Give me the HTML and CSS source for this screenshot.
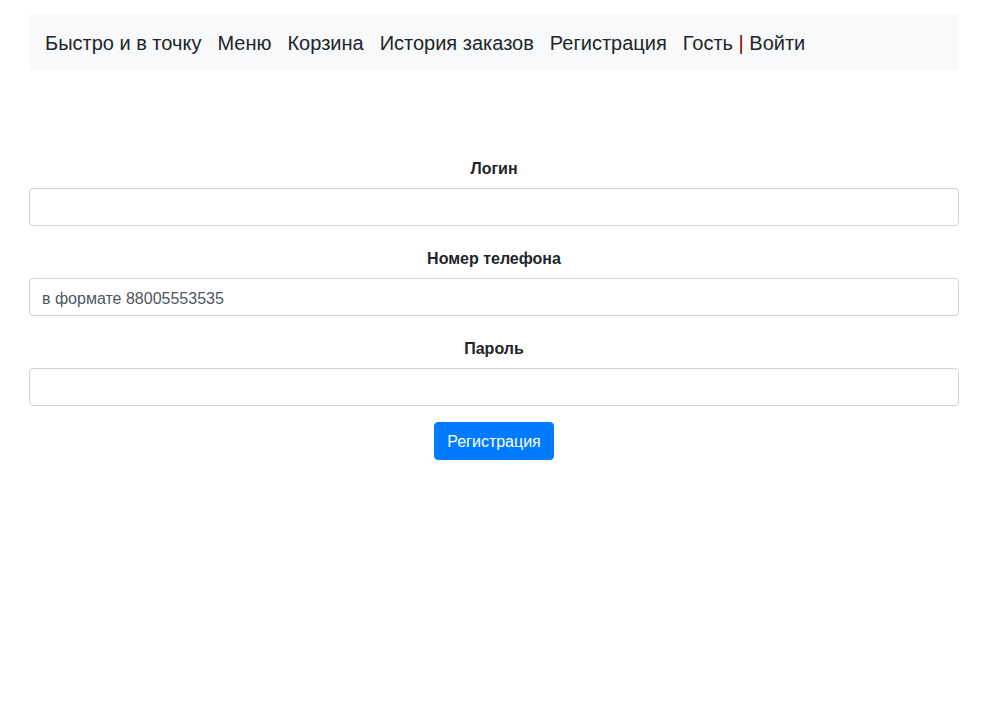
FILE: index.html
```html
<!DOCTYPE html>
<html lang="ru">
<head>
<meta charset="utf-8">
<title>Регистрация</title>
<link rel="stylesheet" href="styles.css">
</head>
<body>
<div class="page">
  <nav class="navbar">
    <a class="brand" href="#">Быстро и в точку</a>
    <a class="nav-link" href="#">Меню</a>
    <a class="nav-link" href="#">Корзина</a>
    <a class="nav-link" href="#">История заказов</a>
    <a class="nav-link" href="#">Регистрация</a>
    <span class="nav-user">Гость <span class="sep">|</span> Войти</span>
  </nav>
  <form class="form">
    <div class="group">
      <label class="label" for="login">Логин</label>
      <input class="input" id="login" type="text">
    </div>
    <div class="group">
      <label class="label" for="phone">Номер телефона</label>
      <input class="input" id="phone" type="text" placeholder="в формате 88005553535">
    </div>
    <div class="group">
      <label class="label" for="pass">Пароль</label>
      <input class="input" id="pass" type="password">
    </div>
    <div class="actions">
      <button class="btn" type="button">Регистрация</button>
    </div>
  </form>
</div>
</body>
</html>
```

FILE: styles.css
```css
* { box-sizing: border-box; }
html, body { margin: 0; padding: 0; background: #fff; }
body {
  font-family: "Liberation Sans", Arial, sans-serif;
  color: #212529;
  font-size: 16px;
  line-height: 1.5;
}
.page {
  padding: 14px 26px 0 29px;
}
.navbar {
  background: #f8f9fa;
  height: 56px;
  display: flex;
  align-items: center;
  padding: 2px 16px 0;
  font-size: 20px;
}
.navbar a { text-decoration: none; color: #212529; }
.brand { margin-right: 8px; }
.nav-link { padding: 0 8px; }
.nav-user { padding: 0 8px; color: #212529; }
.sep { color: #8b0000; }
.form { margin-top: 86px; }
.group { margin-bottom: 20px; display: flex; flex-direction: column; }
.label {
  font-weight: 700;
  text-align: center;
  margin-bottom: 7px;
  padding-top: 1px;
  line-height: 24px;
}
.input {
  height: 38px;
  width: 100%;
  border: 1px solid #ced4da;
  border-radius: 4px;
  padding: 8px 12px 4px;
  font: inherit;
  font-size: 16px;
  color: #495057;
}
.input::placeholder { color: #50575e; }
.actions { display: flex; justify-content: center; margin-top: -4px; }
.btn {
  background: #007bff;
  color: #fff;
  border: 1px solid #007bff;
  border-radius: 4px;
  height: 38px;
  padding: 2px 12px 0;
  font: inherit;
  font-size: 16px;
}
```
